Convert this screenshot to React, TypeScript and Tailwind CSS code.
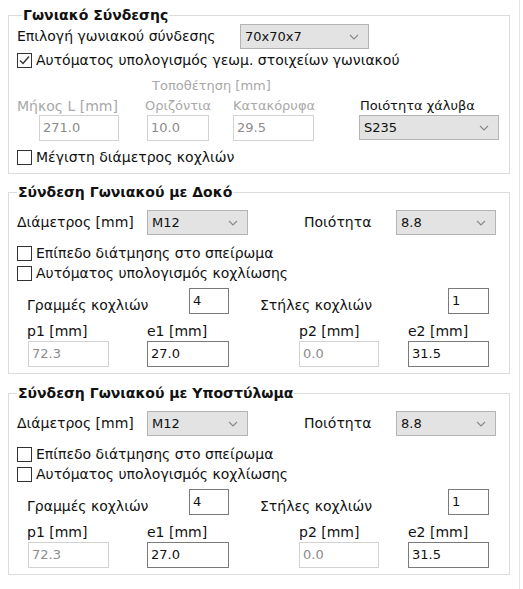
import React from "react";

function Chevron() {
  return (
    <svg width="10" height="6" viewBox="0 0 10 6" className="shrink-0">
      <path d="M1 1 L5 5 L9 1" fill="none" stroke="#8a8a8a" strokeWidth="1.2" />
    </svg>
  );
}

function Select({ value, w }: { value: string; w: string }) {
  return (
    <div
      className={`${w} flex h-[25px] shrink-0 items-center justify-between border border-[#b4b4b4] bg-[#e3e3e3] pl-[4px] pr-[9px] text-[13px] text-[#111]`}
    >
      <span>{value}</span>
      <Chevron />
    </div>
  );
}

function Box({
  value,
  w,
  disabled,
  top,
}: {
  value: string;
  w: string;
  disabled?: boolean;
  top?: boolean;
}) {
  return (
    <div
      className={`${w} flex h-[26px] shrink-0 border bg-white px-[3px] text-[13px] ${top ? "items-start pt-[2px]" : "items-center"} ${
        disabled ? "border-[#d2d2d2] text-[#8c8c8c]" : "border-[#7a7a7a] text-[#111]"
      }`}
    >
      {value}
    </div>
  );
}

function Check({ checked, label }: { checked?: boolean; label: string }) {
  return (
    <div className="flex h-[20px] items-center gap-[4px]">
      <div className="flex h-[15px] w-[15px] shrink-0 items-center justify-center border border-[#333] bg-white">
        {checked && (
          <svg width="13" height="13" viewBox="0 0 13 13">
            <path d="M2 6.5 L5 9.5 L11 2.5" fill="none" stroke="#333" strokeWidth="1.4" />
          </svg>
        )}
      </div>
      <span>{label}</span>
    </div>
  );
}

function Group({ title, children, titleLeft }: { title: string; children: React.ReactNode; titleLeft: string }) {
  return (
    <div className="relative border border-[#dcdcdc]">
      <span className={`absolute ${titleLeft} top-[-10px] bg-white px-[1px] font-bold leading-[18px] text-[#111]`}>
        {title}
      </span>
      {children}
    </div>
  );
}

function BoltGroup({ title }: { title: string }) {
  return (
    <Group title={title} titleLeft="left-[8px]">
      <div className="mt-[17px] flex h-[25px] items-center pl-[8px]">
        <span className="w-[130px] shrink-0">Διάμετρος [mm]</span>
        <Select value="M12" w="w-[101px]" />
        <span className="ml-[56px] w-[92px] shrink-0">Ποιότητα</span>
        <Select value="8.8" w="w-[100px]" />
      </div>
      <div className="mt-[8px] pl-[8px]">
        <Check label="Επίπεδο διάτμησης στο σπείρωμα" />
        <Check label="Αυτόματος υπολογισμός κοχλίωσης" />
      </div>
      <div className="mt-[5px] flex h-[26px] items-end pl-[18px]">
        <span className="w-[162px] shrink-0 leading-[18px]">Γραμμές κοχλιών</span>
        <Box value="4" w="w-[40px]" top />
        <span className="ml-[31px] w-[188px] shrink-0 leading-[18px]">Στήλες κοχλιών</span>
        <Box value="1" w="w-[41px]" top />
      </div>
      <div className="mt-[8px] flex h-[18px] items-center pl-[18px]">
        <span className="w-[120px] shrink-0">p1 [mm]</span>
        <span className="w-[152px] shrink-0">e1 [mm]</span>
        <span className="w-[109px] shrink-0">p2 [mm]</span>
        <span>e2 [mm]</span>
      </div>
      <div className="mb-[6px] mt-[1px] flex pl-[19px]">
        <Box value="72.3" w="w-[81px]" disabled />
        <div className="ml-[38px]">
          <Box value="27.0" w="w-[82px]" />
        </div>
        <div className="ml-[70px]">
          <Box value="0.0" w="w-[80px]" disabled />
        </div>
        <div className="ml-[29px]">
          <Box value="31.5" w="w-[81px]" />
        </div>
      </div>
    </Group>
  );
}

export default function App() {
  return (
    <div className="h-[589px] w-[523px] bg-white font-['DejaVu_Sans',sans-serif] text-[14px] text-[#111]">
      <div className="h-full w-[520px] border-r border-[#e4e4e4] pl-[8px] pr-[9px] pt-[15px]">
        <Group title="Γωνιακό Σύνδεσης" titleLeft="left-[13px]">
          <div className="mt-[8px] flex h-[25px] items-center pl-[8px]">
            <span className="w-[223px] shrink-0">Επιλογή γωνιακού σύνδεσης</span>
            <Select value="70x70x7" w="w-[129px]" />
          </div>
          <div className="mt-[1px] pl-[8px]">
            <Check checked label="Αυτόματος υπολογισμός γεωμ. στοιχείων γωνιακού" />
          </div>
          <div className="mt-[8px] h-[16px] pl-[143px] text-[13px] leading-[16px] text-[#a8a8a8]">Τοποθέτηση [mm]</div>
          <div className="mt-[4px] flex h-[16px] items-center pl-[8px] leading-[16px]">
            <span className="w-[128px] shrink-0 text-[#a8a8a8]">Μήκος L [mm]</span>
            <span className="w-[88px] shrink-0 text-[13px] text-[#a8a8a8]">Οριζόντια</span>
            <span className="w-[127px] shrink-0 text-[13px] text-[#a8a8a8]">Κατακόρυφα</span>
            <span className="text-[13px]">Ποιότητα χάλυβα</span>
          </div>
          <div className="mt-[1px] flex pl-[30px]">
            <Box value="271.0" w="w-[80px]" disabled />
            <div className="ml-[28px]">
              <Box value="10.0" w="w-[62px]" disabled />
            </div>
            <div className="ml-[24px]">
              <Box value="29.5" w="w-[81px]" disabled />
            </div>
            <div className="ml-[45px]">
              <Select value="S235" w="w-[140px]" />
            </div>
          </div>
          <div className="mb-[6px] mt-[6px] pl-[8px]">
            <Check label="Μέγιστη διάμετρος κοχλιών" />
          </div>
        </Group>
        <div className="mt-[18px]">
          <BoltGroup title="Σύνδεση Γωνιακού με Δοκό" />
        </div>
        <div className="mt-[19px]">
          <BoltGroup title="Σύνδεση Γωνιακού με Υποστύλωμα" />
        </div>
      </div>
    </div>
  );
}
